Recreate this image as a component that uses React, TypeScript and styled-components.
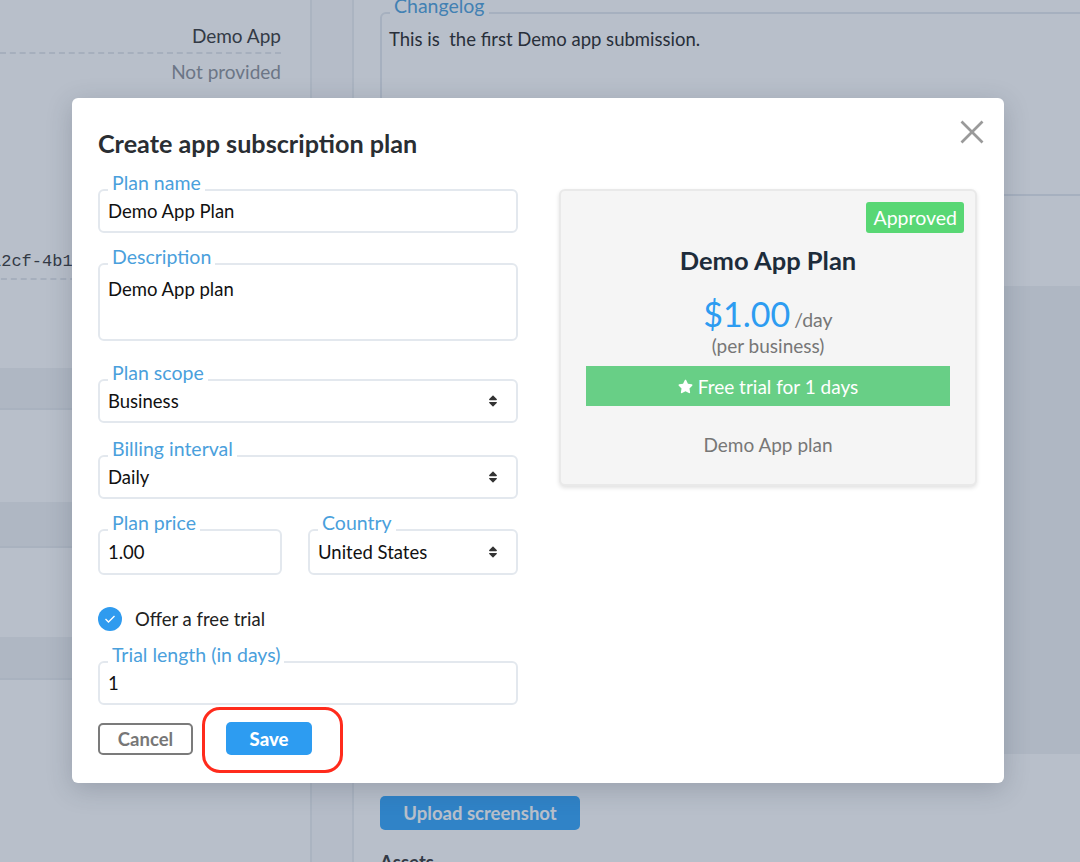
import React from "react";
import styled, { createGlobalStyle } from "styled-components";
import { FaStar, FaSort } from "react-icons/fa";

const GlobalStyle = createGlobalStyle`
  html, body { margin: 0; padding: 0; }
  body { font-family: Lato, "Open Sans", sans-serif; }
  * { box-sizing: border-box; }
`;

/* ---------- background page ---------- */
const Page = styled.div`
  position: relative;
  width: 1080px;
  height: 862px;
  overflow: hidden;
  background: #fff;
  display: grid;
  grid-template-columns: 310px 44px 1fr;
  font-size: 18.5px;
`;

const LeftCol = styled.div`
  display: flex;
  flex-direction: column;
  padding-top: 24px;
  overflow: hidden;
  & > * { flex-shrink: 0; }
`;

const InfoRow = styled.div<{ $dashed?: boolean; $muted?: boolean; $mt?: number }>`
  margin-top: ${(p) => p.$mt ?? 0}px;
  margin-right: 29px;
  text-align: right;
  font-size: 19px;
  line-height: 24px;
  padding-bottom: ${(p) => (p.$dashed ? 4 : 0)}px;
  color: ${(p) => (p.$muted ? "#8b9097" : "#333")};
  border-bottom: ${(p) => (p.$dashed ? "2px dashed #e4e7eb" : "none")};
`;

const MonoRow = styled.div<{ $mt: number }>`
  margin-top: ${(p) => p.$mt}px;
  margin-left: -9px;
  margin-right: 26px;
  font-family: "Liberation Mono", monospace;
  font-size: 17px;
  line-height: 24px;
  color: #333;
  white-space: nowrap;
  padding-bottom: 4px;
  border-bottom: 2px dashed #e4e7eb;
`;

const Band = styled.div<{ $mt: number; $h: number }>`
  margin-top: ${(p) => p.$mt}px;
  height: ${(p) => p.$h}px;
  background: #f1f3f5;
  border-bottom: 2px solid #e8ebef;
`;

const Gutter = styled.div`
  background: #fafbfc;
  border-left: 2px solid #eceef2;
  border-right: 2px solid #eceef2;
`;

const RightCol = styled.div`
  display: flex;
  flex-direction: column;
  align-items: flex-start;
  padding-left: 26px;
  overflow: hidden;
  & > * { flex-shrink: 0; }
`;

const ChangelogBox = styled.div`
  position: relative;
  margin-top: 12px;
  width: 900px;
  height: 184px;
  border: 2px solid #e3e8ee;
  border-radius: 6px;
  padding: 14px 7px;
  color: #222;
  line-height: 22px;
`;

const BoxLegend = styled.span`
  position: absolute;
  top: -19px;
  left: 8px;
  padding: 0 4px;
  background: #fff;
  color: #4aa0dc;
  font-size: 19.5px;
  line-height: 22px;
`;

const GreyPanel = styled.div`
  margin-top: 90px;
  margin-left: -26px;
  width: 800px;
  height: 468px;
  background: #f2f3f5;
`;

const UploadButton = styled.button`
  margin-top: 42px;
  width: 200px;
  height: 34px;
  border: none;
  border-radius: 5px;
  background: #2ea4fa;
  color: #fff;
  font-family: inherit;
  font-size: 18.5px;
  font-weight: 700;
`;

const CutText = styled.div`
  margin-top: 22px;
  color: #333;
  font-weight: 700;
  line-height: 20px;
`;

const Overlay = styled.div`
  position: absolute;
  inset: 0;
  background: rgba(52, 71, 103, 0.35);
`;

/* ---------- modal ---------- */
const Modal = styled.div`
  position: absolute;
  left: 72px;
  top: 98px;
  width: 932px;
  height: 685px;
  background: #fff;
  border-radius: 6px;
  box-shadow: 0 6px 26px rgba(40, 50, 70, 0.22);
  padding: 31px 27px 0 26px;
`;

const Title = styled.h2`
  margin: 0 0 32px;
  font-size: 25.2px;
  line-height: 28px;
  font-weight: 700;
  color: #2a2e33;
`;

const CloseButton = styled.button`
  position: absolute;
  top: 22px;
  right: 20px;
  width: 24px;
  height: 24px;
  padding: 0;
  border: none;
  background: none;
  cursor: pointer;
`;

const Body = styled.div`
  display: grid;
  grid-template-columns: 420px 418px;
  column-gap: 41px;
  align-items: start;
`;

const FormCol = styled.div`
  display: flex;
  flex-direction: column;
`;

const Field = styled.div<{ $mt?: number; $h?: number; $top?: boolean }>`
  position: relative;
  margin-top: ${(p) => p.$mt ?? 0}px;
  height: ${(p) => p.$h ?? 44}px;
  border: 2px solid #e3e8ee;
  border-radius: 6px;
  padding: ${(p) => (p.$top ? "13px 8px 0" : "0 8px")};
  display: flex;
  align-items: ${(p) => (p.$top ? "flex-start" : "center")};
  justify-content: space-between;
  color: #111;
  font-size: 18.5px;
  line-height: 22px;
`;

const FieldLabel = styled.span`
  position: absolute;
  top: -19px;
  left: 8px;
  padding: 0 4px;
  background: #fff;
  color: #4aa0dc;
  font-size: 19.5px;
  line-height: 22px;
  white-space: nowrap;
`;

const SortIcon = styled(FaSort)`
  color: #333;
  width: 12px;
  height: 14px;
  margin-right: 9px;
`;

const Pair = styled.div<{ $mt: number }>`
  margin-top: ${(p) => p.$mt}px;
  display: grid;
  grid-template-columns: 184px 210px;
  column-gap: 26px;
`;

const CheckRow = styled.label<{ $mt: number }>`
  margin-top: ${(p) => p.$mt}px;
  display: flex;
  align-items: center;
  gap: 13px;
  color: #222;
  font-size: 18.5px;
  line-height: 24px;
`;

const CheckCircle = styled.span`
  width: 24px;
  height: 24px;
  border-radius: 50%;
  background: #2f9bef;
  display: flex;
  align-items: center;
  justify-content: center;
`;

const Actions = styled.div<{ $mt: number }>`
  margin-top: ${(p) => p.$mt}px;
  display: flex;
  align-items: center;
  gap: 33px;
`;

const CancelButton = styled.button`
  width: 95px;
  height: 32px;
  border: 2px solid #7b7b7b;
  border-radius: 5px;
  background: #fff;
  color: #777;
  font-family: inherit;
  font-size: 18.5px;
  font-weight: 700;
  padding: 0;
`;

const SaveWrap = styled.div`
  position: relative;
  &::after {
    content: "";
    position: absolute;
    left: -24px;
    right: -31px;
    top: -15px;
    bottom: -18px;
    border: 3px solid #ff2b1c;
    border-radius: 18px;
    pointer-events: none;
  }
`;

const SaveButton = styled.button`
  display: block;
  width: 86px;
  height: 33px;
  border: none;
  border-radius: 5px;
  background: #2d9cf1;
  color: #fff;
  font-family: inherit;
  font-size: 18.5px;
  font-weight: 900;
  padding: 0;
`;

/* ---------- preview card ---------- */
const Card = styled.div`
  height: 297px;
  background: #f5f5f5;
  border: 2px solid #e9e9e9;
  border-radius: 6px;
  box-shadow: 0 2px 4px rgba(0, 0, 0, 0.12);
  padding: 11px 11px 0;
  display: flex;
  flex-direction: column;
  align-items: center;
`;

const Badge = styled.span`
  align-self: flex-end;
  height: 31px;
  padding: 0 7px;
  line-height: 31px;
  border-radius: 3px;
  background: #58d774;
  color: #fff;
  font-size: 19.5px;
`;

const CardTitle = styled.div`
  margin-top: 15px;
  font-size: 25.5px;
  line-height: 24px;
  font-weight: 700;
  color: #1d2c3b;
`;

const PriceRow = styled.div`
  margin-top: 23px;
  display: flex;
  align-items: baseline;
  gap: 4px;
  line-height: 38px;
`;

const Price = styled.span`
  font-size: 34px;
  color: #2d9cf1;
`;

const Per = styled.span`
  font-size: 19.5px;
  color: #777;
`;

const Muted = styled.div<{ $mt: number }>`
  margin-top: ${(p) => p.$mt}px;
  font-size: 19px;
  line-height: 20px;
  color: #777;
`;

const TrialBar = styled.div`
  margin-top: 10px;
  align-self: stretch;
  margin-left: 14px;
  margin-right: 14px;
  height: 40px;
  flex-shrink: 0;
  background: #68cf86;
  color: #fff;
  font-size: 19px;
  display: flex;
  align-items: center;
  justify-content: center;
  gap: 5px;
`;

const Check = () => (
  <svg width="12" height="10" viewBox="0 0 12 10">
    <polyline points="1.5,5 4.5,8 10.5,2" fill="none" stroke="#fff" strokeWidth="1.4" />
  </svg>
);

const CloseIcon = () => (
  <svg width="24" height="24" viewBox="0 0 24 24">
    <line x1="1.5" y1="1.5" x2="22.5" y2="22.5" stroke="#9a9a9a" strokeWidth="2.6" />
    <line x1="22.5" y1="1.5" x2="1.5" y2="22.5" stroke="#9a9a9a" strokeWidth="2.6" />
  </svg>
);

export default function App() {
  return (
    <>
      <GlobalStyle />
      <Page>
        <LeftCol>
          <InfoRow $dashed>Demo App</InfoRow>
          <InfoRow $muted $mt={6}>Not provided</InfoRow>
          <MonoRow $mt={166}>12cf-4b1e-9d0a-5c7e31f0a2b4</MonoRow>
          <Band $mt={88} $h={42} />
          <Band $mt={92} $h={46} />
          <Band $mt={89} $h={43} />
        </LeftCol>
        <Gutter />
        <RightCol>
          <ChangelogBox>
            <BoxLegend>Changelog</BoxLegend>
            {"This is\u00a0 the first Demo app submission."}
          </ChangelogBox>
          <GreyPanel />
          <UploadButton>Upload screenshot</UploadButton>
          <CutText>Assets</CutText>
        </RightCol>

        <Overlay />

        <Modal>
          <CloseButton aria-label="Close">
            <CloseIcon />
          </CloseButton>
          <Title>Create app subscription plan</Title>
          <Body>
            <FormCol>
              <Field>
                <FieldLabel>Plan name</FieldLabel>
                Demo App Plan
              </Field>
              <Field $mt={30} $h={78} $top>
                <FieldLabel>Description</FieldLabel>
                Demo App plan
              </Field>
              <Field $mt={38}>
                <FieldLabel>Plan scope</FieldLabel>
                Business
                <SortIcon />
              </Field>
              <Field $mt={32}>
                <FieldLabel>Billing interval</FieldLabel>
                Daily
                <SortIcon />
              </Field>
              <Pair $mt={30}>
                <Field $h={46}>
                  <FieldLabel>Plan price</FieldLabel>
                  1.00
                </Field>
                <Field $h={46}>
                  <FieldLabel>Country</FieldLabel>
                  United States
                  <SortIcon />
                </Field>
              </Pair>
              <CheckRow $mt={32}>
                <CheckCircle>
                  <Check />
                </CheckCircle>
                Offer a free trial
              </CheckRow>
              <Field $mt={30}>
                <FieldLabel>Trial length (in days)</FieldLabel>
                1
              </Field>
              <Actions $mt={17}>
                <CancelButton>Cancel</CancelButton>
                <SaveWrap>
                  <SaveButton>Save</SaveButton>
                </SaveWrap>
              </Actions>
            </FormCol>

            <Card>
              <Badge>Approved</Badge>
              <CardTitle>Demo App Plan</CardTitle>
              <PriceRow>
                <Price>$1.00</Price>
                <Per>/day</Per>
              </PriceRow>
              <Muted $mt={-3}>(per business)</Muted>
              <TrialBar>
                <FaStar size={15} />
                Free trial for 1 days
              </TrialBar>
              <Muted $mt={29}>Demo App plan</Muted>
            </Card>
          </Body>
        </Modal>
      </Page>
    </>
  );
}
